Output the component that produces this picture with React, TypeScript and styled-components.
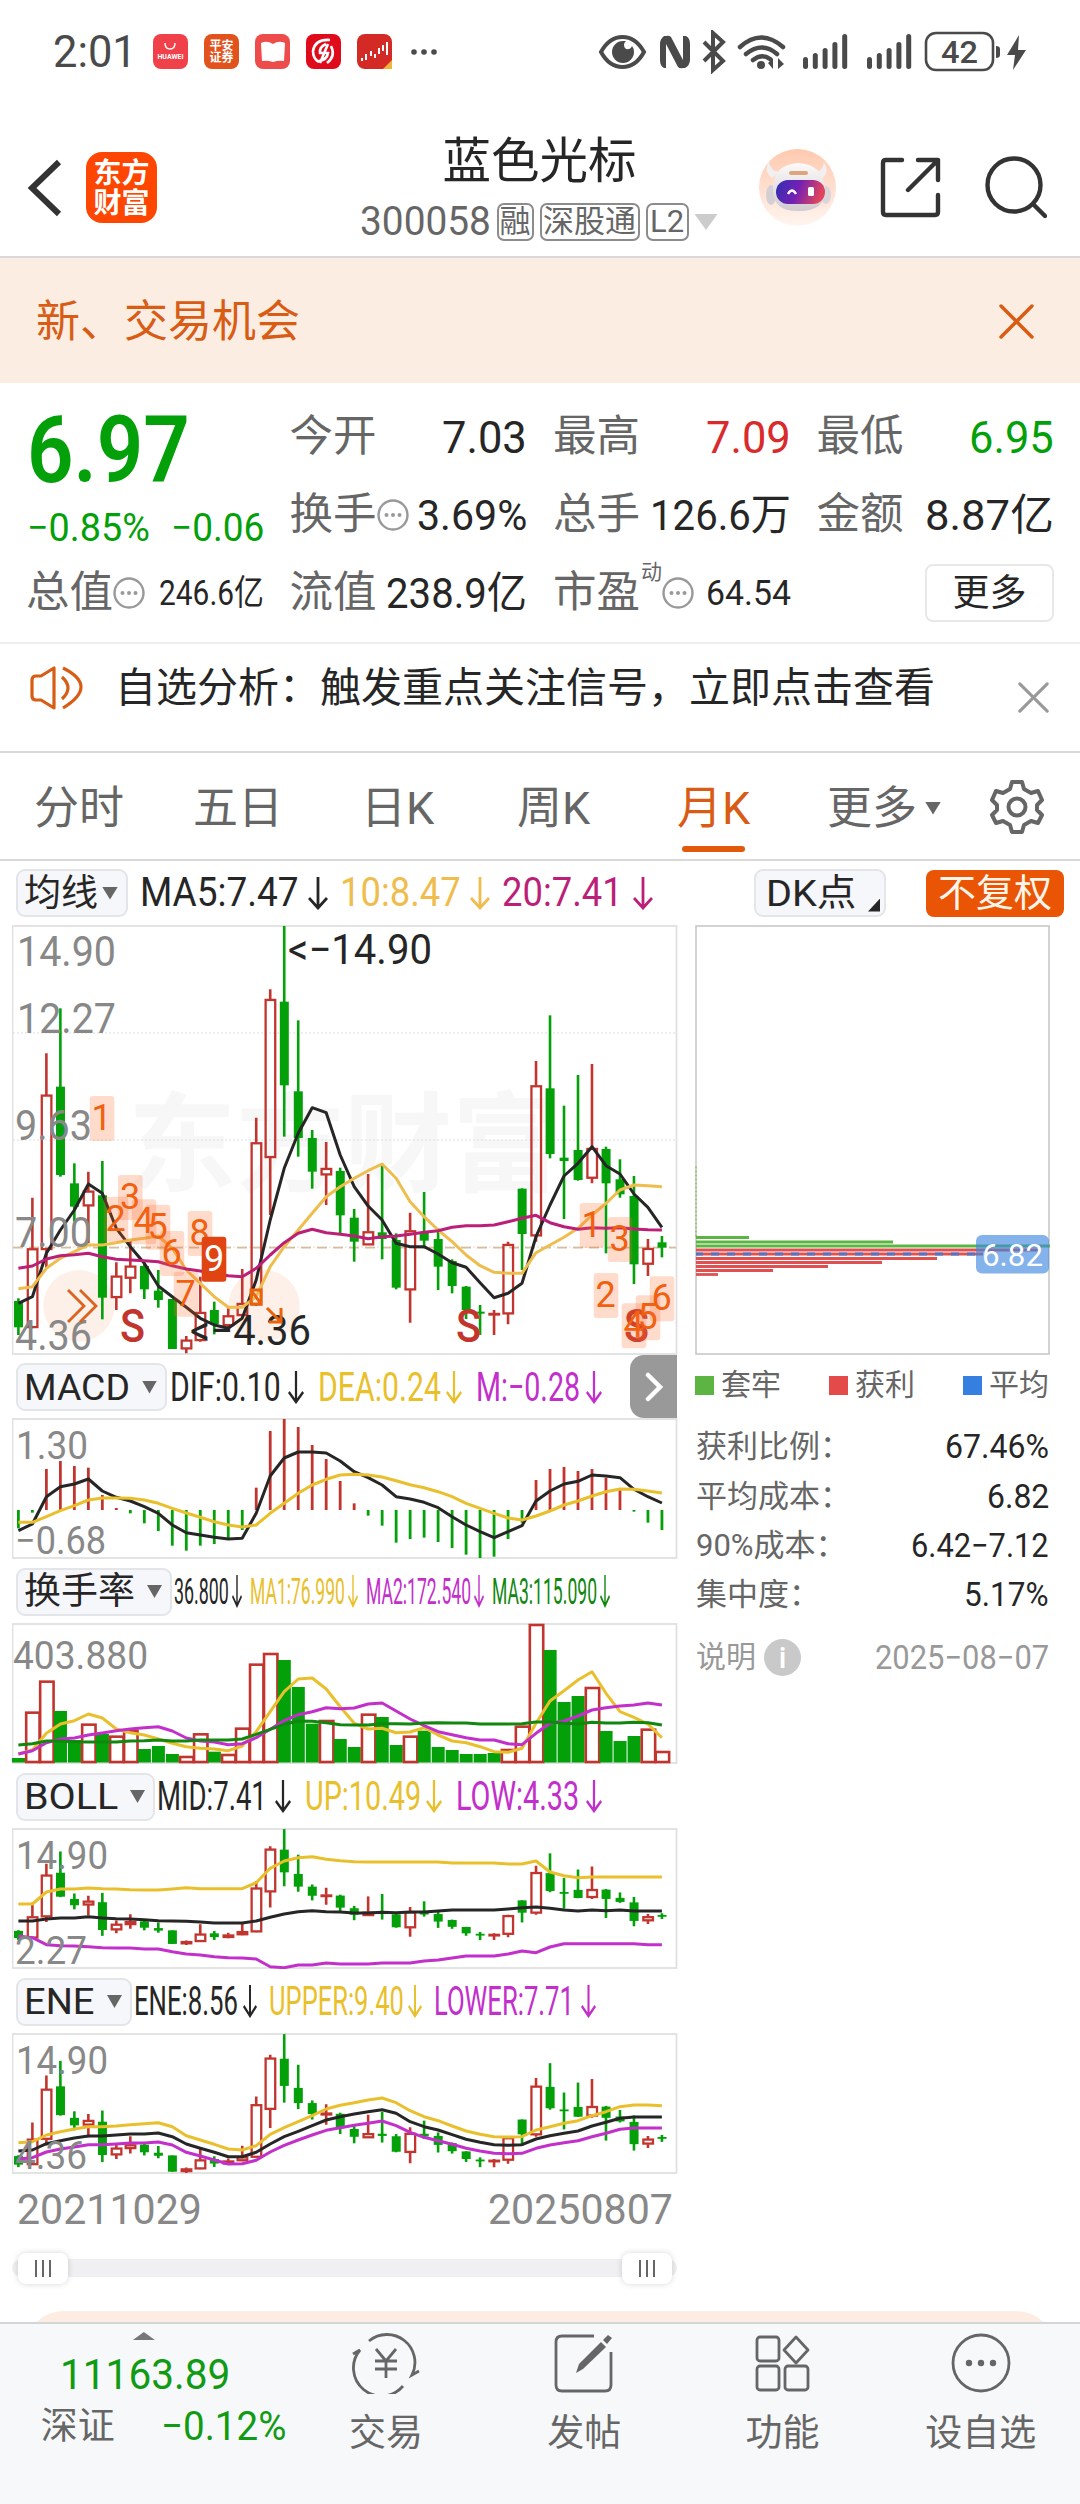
import React, { useLayoutEffect, useRef, useState } from 'react';
import styled, { createGlobalStyle } from 'styled-components';

const GREEN = '#04a00a';
const RED = '#c2352f';
const INK = '#262626';
const GREY = '#666';
const YELLOW = '#e9c02c';
const PURPLE = '#c22fcb';

const GlobalStyle = createGlobalStyle`
  * {
    box-sizing: border-box;
  }
  body {
    margin: 0;
    background: #fff;
    font-family: Roboto, 'Noto Sans CJK SC', sans-serif;
    color: ${INK};
  }
  svg {
    display: block;
    flex: none;
  }
`;

const Page = styled.div`
  width: 1080px;
  height: 2504px;
  overflow: hidden;
  display: flex;
  flex-direction: column;
  line-height: 1;
  white-space: nowrap;
`;

/* ---------- fitted text ---------- */

const FitBox = styled.span<{ $w: number }>`
  display: block;
  flex: none;
  width: ${({ $w }) => $w}px;
`;

const FitInner = styled.span`
  display: inline-block;
  vertical-align: top;
  transform-origin: left center;
`;

// Squeezes a label so that it takes exactly the width it was given
const FitText: React.FC<{ w: number; children: React.ReactNode }> = ({ w, children }) => {
  const ref = useRef<HTMLSpanElement>(null);
  const [scale, setScale] = useState(1);

  useLayoutEffect(() => {
    if (ref.current) setScale(w / ref.current.offsetWidth);
  }, [w, children]);

  return (
    <FitBox $w={w}>
      <FitInner ref={ref} style={{ transform: `scaleX(${scale})` }}>
        {children}
      </FitInner>
    </FitBox>
  );
};

/* ---------- status bar ---------- */

const StatusBar = styled.div`
  height: 103px;
  padding: 0 54px 0 53px;
  display: flex;
  align-items: center;
  justify-content: space-between;
  color: #4a4a4a;
`;

const StatusLeft = styled.div`
  display: flex;
  align-items: center;
  gap: 16px;
  font-size: 45px;
`;

const StatusRight = styled.div`
  display: flex;
  align-items: center;
`;

const AppBadge = styled.span<{ $bg: string }>`
  width: 35px;
  height: 35px;
  border-radius: 8px;
  background: ${({ $bg }) => $bg};
  color: #fff;
  display: flex;
  align-items: center;
  justify-content: center;
  text-align: center;
  white-space: pre;
  font-size: 12px;
  font-weight: 700;
`;

const BadgeStack = styled.span`
  display: flex;
  flex-direction: column;
  align-items: center;
  gap: 4px;
`;

const BadgeWord = styled.span`
  font-size: 7px;
`;

const StatusIcons = () => (
  <StatusRight>
    <svg width="428" height="44" viewBox="598 30 428 44" fill="#4a4a4a">
      <path d="M601 52c11-20 32-20 43 0-11 20-32 20-43 0z" fill="none" stroke="#4a4a4a" strokeWidth="4" />
      <path d="M623 41a11 11 0 1 0 11 11 9 9 0 0 0-2-6c-2 5-8 4-8-1 0-2 1-3 2-4z" />
      <path d="M664 36q-4 3-4 8v16q0 6 4 8h2V44l12 23q2 2 5 1h2q5-3 5-8V44q0-6-4-8h-3v24l-12-23q-2-2-5-1z" />
      <path d="M704 42l19 19-10 9V33l10 9-19 19" fill="none" stroke="#4a4a4a" strokeWidth="4" />
      <path d="M740 47q21-19 43 0M746 54q16-13 31 0M753 60q9-7 17-1" fill="none" stroke="#4a4a4a" strokeWidth="4.5" strokeLinecap="round" />
      <circle cx="761" cy="65" r="4" />
      <path d="M773 58v11l-5-6zM778 69V58l6 6z" />
      {[803, 867].map((x) =>
        [12, 16, 21, 27, 35].map((h, i) => (
          <rect key={`${x}-${i}`} x={x + i * 9.8} y={69 - h} width="5" height={h} rx="2.5" />
        ))
      )}
      <rect x="926" y="33" width="67" height="37" rx="10" fill="none" stroke="#4a4a4a" strokeWidth="2.6" />
      <path d="M996 46q4 0 4 3v6q0 3-4 3z" />
      <path d="M1019 35l-12 20h8l-2 15 13-20h-8z" />
      <text x="941" y="63" fontSize="32" fontWeight="500" textLength="37" lengthAdjust="spacingAndGlyphs">42</text>
    </svg>
  </StatusRight>
);

/* ---------- header ---------- */

const Header = styled.header`
  height: 155px;
  padding: 16px 31px 0 27px;
  display: flex;
  align-items: center;
  justify-content: space-between;
  border-bottom: 2px solid #d9d9d9;
`;

const HeaderSide = styled.div`
  width: 300px;
  display: flex;
  align-items: center;
`;

const HeaderRight = styled(HeaderSide)`
  width: 290px;
  gap: 44px;
`;

const BrandLogo = styled.span`
  width: 71px;
  height: 71px;
  margin-left: 23px;
  border-radius: 16px;
  background: #fe4600;
  color: #fff;
  font: 700 28px/30px 'Noto Sans CJK SC', sans-serif;
  text-align: center;
  white-space: pre;
  padding-top: 4px;
`;

const TitleBlock = styled.div`
  display: flex;
  flex-direction: column;
  align-items: center;
  margin: -5px 18px 0 0;
`;

const StockName = styled.h1`
  margin: 0 0 0 11px;
  font: 400 48.5px/58px 'Noto Sans CJK SC', sans-serif;
`;

const CodeLine = styled.div`
  display: flex;
  align-items: center;
  gap: 6px;
  height: 40px;
  margin: 16px 0 0 9px;
  font-size: 40px;
  color: ${GREY};
`;

const Tag = styled.span<{ $w: number }>`
  width: ${({ $w }) => $w}px;
  height: 38px;
  border: 2px solid #8c8c8c;
  border-radius: 7px;
  font-size: 31px;
  line-height: 34px;
  text-align: center;
`;

const Triangle = styled.span<{ $w: number; $h: number; $c?: string }>`
  flex: none;
  width: ${({ $w }) => $w}px;
  height: ${({ $h }) => $h}px;
  background: ${({ $c }) => $c || GREY};
  clip-path: polygon(0 0, 100% 0, 50% 100%);
`;

const RobotIcon = () => (
  <svg width="77" height="77" viewBox="0 0 77 77">
    <defs>
      <linearGradient id="halo" x1="0" y1="0" x2="0" y2="1">
        <stop offset="0" stopColor="#ffc9ae" />
        <stop offset="1" stopColor="#fff5f0" />
      </linearGradient>
      <linearGradient id="visor" x1="0" y1="0" x2="1" y2=".2">
        <stop offset="0" stopColor="#2f30b0" />
        <stop offset=".5" stopColor="#7420b4" />
        <stop offset="1" stopColor="#e0455c" />
      </linearGradient>
      <linearGradient id="shell" x1="0" y1="0" x2="0" y2="1">
        <stop offset="0" stopColor="#fdfafa" />
        <stop offset="1" stopColor="#cfcbd0" />
      </linearGradient>
    </defs>
    <circle cx="38.5" cy="38.5" r="38.5" fill="url(#halo)" />
    <path d="M10 13q-6 9 3 16l8-6q-9 0-11-10zM65 13q6 9-1 16l-9-6q9 0 10-10z" fill="#f1eff1" />
    <ellipse cx="12" cy="46" rx="5" ry="10" fill="#d3cfd5" />
    <ellipse cx="67" cy="46" rx="5" ry="9" fill="#d9d5da" />
    <path d="M14 40q0-24 25-26 25 1 27 26 2 22-27 22-26 0-25-22z" fill="url(#shell)" />
    <rect x="17" y="31" width="49" height="24" rx="12" fill="url(#visor)" />
    <rect x="30" y="22" width="19" height="4" rx="2" fill="#dda47e" />
    <path d="M29 45q4-7 8 0" fill="none" stroke="#fff" strokeWidth="2.4" />
    <rect x="49" y="38" width="6" height="9" rx="1.5" fill="#fff" />
  </svg>
);

/* ---------- banner ---------- */

const Banner = styled.div`
  height: 125px;
  padding: 2px 46px 0 36px;
  display: flex;
  align-items: center;
  justify-content: space-between;
  background: #fcede3;
  color: #d85c14;
  font-size: 44px;
`;

const Cross: React.FC<{ size: number; color: string }> = ({ size, color }) => (
  <svg width={size} height={size} viewBox="0 0 34 34" fill="none" stroke={color} strokeWidth="3.4">
    <path d="M2 2l30 30M32 2L2 32" strokeLinecap="round" />
  </svg>
);

/* ---------- quote ---------- */

const Quote = styled.section`
  height: 261px;
  padding: 15px 26px 0 28px;
  display: grid;
  grid-template-columns: repeat(4, 235.5px);
  grid-template-rows: repeat(3, 78px);
  column-gap: 28px;
  border-bottom: 2px solid #ededed;
`;

const PriceBlock = styled.div`
  grid-row: span 2;
  margin-left: -1px;
  padding-top: 7px;
  color: ${GREEN};
`;

const Price = styled.div`
  font-size: 92px;
  font-weight: 600;
`;

const Change = styled.div`
  display: flex;
  justify-content: space-between;
  margin-top: 12px;
  font-size: 39px;
`;

const Cell = styled.div<{ $color?: string; $size?: number }>`
  display: flex;
  align-items: center;
  justify-content: space-between;
  color: ${({ $color }) => $color || INK};
  font-size: ${({ $size }) => $size || 43}px;
`;

const CellLabel = styled.span`
  display: flex;
  align-items: center;
  margin-left: -2px;
  font-size: 43.5px;
  color: ${GREY};
`;

const Sup = styled.sup`
  font-size: 21px;
  align-self: flex-start;
  margin: -9px 0 0 1px;
`;

const MoreButton = styled.button`
  width: 129px;
  height: 58px;
  margin-left: auto;
  border: 2px solid #e8e8e8;
  border-radius: 8px;
  background: #fff;
  color: ${INK};
  font: 400 37px/48px 'Noto Sans CJK SC', sans-serif;
  padding: 0 0 6px;
`;

const DotsCircle = () => (
  <svg width="32" height="32" viewBox="0 0 32 32" fill="#999">
    <circle cx="16" cy="16" r="14.5" fill="none" stroke="#999" strokeWidth="2.4" />
    {[9.5, 16, 22.5].map((x) => (
      <circle key={x} cx={x} cy="16" r="2" />
    ))}
  </svg>
);

interface QuoteItem {
  label: string;
  value: string;
  w: number;
  color?: string;
  size?: number;
  info?: boolean;
  sup?: string;
}

const quoteRows: QuoteItem[] = [
  { label: '今开', value: '7.03', w: 85, size: 45 },
  { label: '最高', value: '7.09', w: 85, size: 45, color: '#d92b2b' },
  { label: '最低', value: '6.95', w: 85, size: 45, color: GREEN },
  { label: '换手', value: '3.69%', w: 110, info: true },
  { label: '总手', value: '126.6万', w: 141 },
  { label: '金额', value: '8.87亿', w: 129 },
  { label: '总值', value: '246.6亿', w: 105, size: 35, info: true },
  { label: '流值', value: '238.9亿', w: 141 },
  { label: '市盈', value: '64.54', w: 85, size: 35, info: true, sup: '动' },
];

/* ---------- notice ---------- */

const Notice = styled.div`
  height: 109px;
  padding: 0 31px 0 30px;
  display: flex;
  align-items: center;
  border-bottom: 2px solid #d9d9d9;
  font-size: 41px;
`;

const NoticeText = styled.span`
  flex: 1;
  margin: -18px 0 0 31px;
`;

const NoticeIcon = styled.span`
  margin-top: -20px;
`;

/* ---------- tabs ---------- */

const Tabs = styled.nav`
  height: 108px;
  padding: 1px 36px 0 34px;
  display: flex;
  align-items: center;
  border-bottom: 2px solid #d9d9d9;
  font-size: 45px;
  color: ${GREY};
`;

const Tab = styled.span<{ $w: number; $active?: boolean }>`
  position: relative;
  width: ${({ $w }) => $w}px;
  padding-top: 3px;
  display: flex;
  align-items: center;
  gap: 8px;
  color: ${({ $active }) => ($active ? '#d85c14' : GREY)};
  &::after {
    content: '';
    display: ${({ $active }) => ($active ? 'block' : 'none')};
    position: absolute;
    left: 5px;
    top: 63px;
    width: 63px;
    height: 6px;
    border-radius: 3px;
    background: #e15a0c;
  }
`;

/* ---------- indicator rows ---------- */

const Toolbar = styled.div`
  height: 64px;
  padding: 0 16px;
  display: flex;
  align-items: center;
`;

const Picker = styled.span<{ $w: number }>`
  flex: none;
  width: ${({ $w }) => $w}px;
  height: 48px;
  padding: 0 8px 0 6px;
  display: flex;
  align-items: center;
  justify-content: space-between;
  border: 2px solid #e3e5e9;
  border-radius: 9px;
  background: #f6f7fa;
  font-size: 37px;
`;

const DkPicker = styled(Picker)`
  margin-left: auto;
  padding: 0 4px 0 10px;
`;

const Corner = styled.span`
  width: 12px;
  height: 13px;
  margin-top: 24px;
  background: ${INK};
  clip-path: polygon(100% 0, 100% 100%, 0 100%);
`;

const Adjust = styled.span`
  width: 138px;
  height: 47px;
  margin-left: 40px;
  border-radius: 8px;
  background: #e95504;
  color: #fff5ea;
  font-size: 38px;
  line-height: 46px;
  text-align: center;
`;

const IndicatorRow = styled.div<{ $h: number }>`
  height: ${({ $h }) => $h}px;
  padding: 1px 0 0 4px;
  display: flex;
  align-items: center;
`;

const LegendItem = styled.span<{ $color: string; $ml: number; $gap: number; $size: number }>`
  display: flex;
  align-items: center;
  margin-left: ${({ $ml }) => $ml}px;
  gap: ${({ $gap }) => $gap}px;
  color: ${({ $color }) => $color};
  font-size: ${({ $size }) => $size}px;
`;

const NextButton = styled.span`
  width: 47px;
  height: 63px;
  margin: -1px 0 0 auto;
  border-radius: 14px 0 0 14px;
  background: #999;
  display: flex;
  align-items: center;
  justify-content: center;
`;

const Arrow: React.FC<{ w: number }> = ({ w }) => (
  <svg width={w} height="33" viewBox="0 0 20 33" preserveAspectRatio="none" fill="none" stroke="currentColor" strokeWidth="2.8">
    <path d="M10 0v31M1 21l9 10 9-10" />
  </svg>
);

// text, colour, left margin, text width, gap, arrow width
type LegendEntry = [string, string, number, number, number, number];

const Legend: React.FC<{ items: LegendEntry[]; size?: number }> = ({ items, size = 41 }) => (
  <>
    {items.map(([text, color, ml, w, gap, arrow]) => (
      <LegendItem key={text} $color={color} $ml={ml} $gap={gap} $size={size}>
        <FitText w={w}>{text}</FitText>
        <Arrow w={arrow} />
      </LegendItem>
    ))}
  </>
);

/* ---------- chart data ---------- */

// wick top, wick bottom, body top, body bottom (in thirds of a pixel), 1 = rising
const candles = [
  [1195, 1305, 1203, 1282, 0], [893, 1285, 1046, 1283, 1], [460, 1105, 585, 1049, 1], [325, 830, 560, 825, 0],
  [790, 965, 850, 920, 0], [815, 1030, 873, 918, 1], [783, 1258, 886, 1193, 0], [1087, 1230, 1128, 1193, 1],
  [1020, 1180, 1098, 1135, 1], [1090, 1197, 1098, 1168, 0], [1110, 1223, 1172, 1200, 0], [1197, 1347, 1197, 1347, 0],
  [1308, 1360, 1320, 1347, 1], [1130, 1325, 1237, 1322, 1], [1205, 1303, 1230, 1272, 0], [1225, 1285, 1247, 1277, 1],
  [1107, 1250, 1210, 1247, 1], [653, 1217, 728, 1215, 1], [268, 945, 298, 773, 1], [78, 710, 305, 556, 0],
  [361, 770, 574, 714, 0], [690, 866, 714, 815, 0], [726, 915, 805, 825, 1], [803, 1000, 813, 946, 0],
  [927, 1085, 953, 1025, 0], [822, 1035, 995, 1035, 1], [795, 1078, 997, 1017, 0], [1000, 1168, 1020, 1163, 0],
  [938, 1268, 992, 1170, 1], [876, 1045, 997, 1022, 0], [985, 1170, 1017, 1100, 0], [1078, 1180, 1083, 1158, 0],
  [1158, 1257, 1160, 1230, 0], [1215, 1305, 1235, 1241, 0], [1230, 1305, 1240, 1243, 1], [1025, 1273, 1033, 1242, 1],
  [865, 1110, 866, 1002, 0], [483, 1025, 557, 1008, 1], [346, 775, 565, 762, 0], [617, 957, 773, 783, 0],
  [525, 842, 750, 840, 0], [492, 850, 745, 835, 1], [740, 1060, 747, 850, 0], [778, 893, 838, 883, 0],
  [828, 1152, 888, 1093, 0], [1017, 1128, 1045, 1093, 1], [1008, 1072, 1027, 1043, 0],
];

const ma5 = [1210, 1190, 1060, 990, 930, 852, 880, 985, 1040, 1090, 1158, 1190, 1222, 1255, 1275, 1285, 1255, 1140, 960, 805, 700, 623, 638, 765, 860, 918, 960, 1030, 1040, 1040, 1062, 1088, 1102, 1148, 1193, 1180, 1150, 1010, 915, 828, 790, 740, 797, 822, 882, 922, 982];
const ma10 = [1166, 1160, 1105, 1075, 1055, 1035, 1035, 1028, 1020, 1015, 1008, 1045, 1110, 1150, 1190, 1222, 1222, 1190, 1100, 1040, 990, 940, 890, 860, 835, 812, 792, 835, 905, 950, 990, 1025, 1065, 1097, 1117, 1120, 1120, 1058, 1035, 1012, 985, 945, 910, 870, 855, 857, 860];
const ma20 = [1105, 1098, 1077, 1067, 1064, 1060, 1070, 1078, 1080, 1082, 1085, 1097, 1107, 1113, 1120, 1127, 1130, 1105, 1065, 1028, 1000, 988, 998, 1003, 1008, 1016, 1010, 1008, 1003, 997, 992, 982, 977, 977, 975, 965, 955, 946, 968, 980, 988, 983, 985, 983, 987, 989, 990];

const macdBars = [535, 488, 357, 333, 348, 353, 435, 474, 490, 520, 543, 587, 602, 587, 582, 565, 540, 413, 243, 207, 231, 285, 327, 393, 460, 497, 527, 578, 567, 563, 576, 594, 614, 624, 620, 567, 518, 390, 357, 351, 363, 357, 383, 415, 485, 518, 540];
const dif = [542, 522, 440, 410, 402, 387, 423, 442, 453, 470, 490, 525, 548, 555, 562, 567, 565, 490, 378, 324, 306, 306, 309, 333, 365, 383, 405, 440, 447, 457, 473, 500, 525, 545, 563, 545, 527, 453, 423, 402, 394, 375, 378, 383, 418, 440, 459];
const dea = [517, 517, 500, 482, 467, 450, 444, 444, 445, 450, 460, 475, 489, 502, 515, 525, 531, 525, 490, 460, 430, 405, 388, 375, 373, 375, 381, 392, 404, 413, 425, 440, 460, 475, 490, 504, 510, 498, 483, 465, 453, 438, 425, 417, 418, 423, 429];

const turnover = [594, 455, 362, 453, 540, 491, 522, 527, 510, 567, 558, 582, 588, 520, 575, 582, 503, 311, 279, 300, 381, 491, 480, 537, 561, 461, 471, 555, 527, 512, 561, 570, 582, 582, 579, 567, 497, 192, 270, 426, 408, 381, 513, 543, 528, 506, 573];
const turnoverUp = [1, 2, 5, 7, 8, 12, 13, 15, 16, 17, 18, 22, 25, 28, 35, 36, 37, 41, 45, 46];
const tMa1 = [582, 570, 520, 492, 482, 462, 474, 507, 518, 525, 537, 550, 560, 565, 567, 572, 558, 515, 455, 395, 357, 354, 387, 440, 490, 507, 505, 518, 516, 503, 525, 543, 548, 560, 575, 577, 565, 490, 423, 392, 360, 335, 400, 455, 472, 492, 533];
const tMa2 = [582, 572, 548, 537, 534, 525, 519, 512, 507, 503, 500, 513, 534, 543, 546, 554, 551, 533, 508, 482, 464, 455, 443, 446, 444, 432, 429, 453, 477, 497, 515, 524, 533, 540, 540, 551, 554, 520, 490, 483, 468, 450, 443, 438, 435, 429, 435];
const tMa3 = [555, 551, 543, 543, 545, 546, 546, 546, 543, 542, 540, 543, 543, 540, 540, 540, 537, 523, 508, 493, 483, 484, 488, 494, 495, 495, 491, 491, 492, 489, 488, 489, 489, 492, 492, 492, 491, 486, 486, 490, 492, 487, 489, 489, 487, 488, 495];

const bollUp = [402, 402, 366, 357, 357, 354, 356, 357, 359, 360, 360, 357, 353, 356, 356, 356, 356, 338, 295, 273, 263, 260, 268, 272, 275, 276, 276, 276, 276, 276, 276, 279, 279, 279, 279, 282, 282, 273, 306, 317, 323, 321, 321, 321, 321, 321, 321];
const bollMid = [453, 453, 447, 444, 444, 440, 444, 446, 447, 449, 452, 453, 454, 456, 459, 459, 459, 453, 442, 432, 425, 422, 425, 426, 429, 429, 427, 428, 426, 426, 423, 420, 420, 420, 420, 417, 413, 411, 415, 420, 423, 420, 422, 420, 423, 423, 423];
const bollLow = [498, 503, 524, 527, 528, 530, 533, 534, 534, 537, 537, 545, 552, 555, 560, 563, 564, 567, 590, 593, 585, 585, 579, 582, 582, 582, 579, 579, 579, 573, 570, 564, 558, 558, 558, 552, 543, 548, 531, 521, 521, 521, 521, 521, 521, 524, 524];

const eneUp = [518, 515, 495, 485, 477, 470, 470, 468, 464, 461, 458, 470, 497, 510, 523, 537, 540, 527, 493, 473, 455, 437, 417, 406, 398, 390, 384, 398, 422, 440, 452, 468, 483, 493, 500, 501, 500, 480, 470, 460, 452, 437, 425, 410, 405, 405, 407];
const eneMid = [543, 540, 521, 512, 504, 498, 498, 495, 492, 492, 489, 500, 522, 535, 547, 560, 560, 547, 522, 500, 484, 467, 450, 440, 432, 425, 419, 430, 455, 470, 480, 494, 508, 517, 524, 526, 524, 507, 497, 490, 483, 468, 457, 445, 441, 441, 441];
const eneLow = [567, 563, 546, 537, 531, 524, 524, 522, 519, 519, 516, 525, 547, 558, 570, 582, 581, 571, 546, 526, 510, 495, 481, 473, 466, 460, 453, 467, 487, 502, 512, 523, 535, 543, 550, 551, 550, 535, 525, 518, 512, 500, 490, 478, 474, 474, 474];

// nine-turn counters: digit, x, y
const counters: [number, number, number][] = [
  [1, 77.7, 171], [2, 91.7, 271.7], [3, 106, 250], [4, 119.7, 274.3], [5, 133.7, 279.7], [6, 147.7, 306],
  [7, 161.7, 346.7], [8, 175.7, 286], [1, 567.7, 278], [2, 581.7, 348], [3, 595.7, 292], [4, 609.7, 378.3],
  [5, 623.7, 370.3], [6, 637.7, 351.3],
];

const px = (i: number) => 6.4 + i * 13.99;

/* ---------- chart parts ---------- */

const Line: React.FC<{ data: number[]; off: number; color: string }> = ({ data, off, color }) => (
  <polyline
    points={data.map((v, i) => `${px(i).toFixed(1)},${(v / 3 - off).toFixed(1)}`).join(' ')}
    fill="none"
    stroke={color}
    strokeWidth="3"
    strokeLinejoin="round"
  />
);

const Candles: React.FC<{ scale: (v: number) => number }> = ({ scale }) => (
  <>
    {candles.map(([hi, lo, top, bottom, up], i) => {
      const [h, l, t, b] = [hi, lo, top, bottom].map(scale);
      const x = px(i);
      return up ? (
        <g key={i} stroke={RED} fill="none">
          <path d={`M${x} ${h}V${t}M${x} ${b}V${l}`} strokeWidth="2.6" />
          <rect x={x - 4.6} y={t + 0.6} width="9.6" height={Math.max(b - t - 1.2, 0.6)} strokeWidth="2.3" />
        </g>
      ) : (
        <g key={i} fill={GREEN}>
          <rect x={x - 1.3} y={h} width="2.6" height={l - h} />
          <rect x={x - 4.4} y={t} width="9" height={Math.max(b - t, 1.8)} />
        </g>
      );
    })}
  </>
);

const AxisLabel: React.FC<{ x: number; y: number; w: number; size?: number; color?: string; children: string }> = ({
  x, y, w, size = 42, color = '#888', children,
}) => (
  <text x={x} y={y} fontSize={size} fill={color} textLength={w} lengthAdjust="spacingAndGlyphs">
    {children}
  </text>
);

const Frame: React.FC<{ h: number }> = ({ h }) => (
  <rect x="0.5" y="1" width="664" height={h - 2} fill="none" stroke="#e0e0e0" strokeWidth="1.8" />
);

const MainChart = () => (
  <svg width="666" height="430">
    <text x="116" y="258" fontSize="108" fontWeight="700" fill="#f7f7f7">东方财富</text>
    {[108, 215, 322].map((y) => (
      <path key={y} d={`M1 ${y}H664`} stroke="#dcdcdc" strokeDasharray="2 2" />
    ))}
    <Frame h={430} />
    <path d="M1 322.6H664" stroke="#d6bd9c" strokeWidth="1.6" strokeDasharray="10 6" />
    <circle cx="67" cy="380.7" r="35.7" fill="#fdf0e9" />
    <circle cx="252" cy="380.7" r="35.7" fill="#fdf0e9" />
    <Candles scale={(v) => v / 3 - 25} />
    <Line data={ma5} off={25} color={INK} />
    <Line data={ma10} off={25} color="#efbd4e" />
    <Line data={ma20} off={25} color="#bb1f77" />
    <AxisLabel x={5} y={41} w={99}>14.90</AxisLabel>
    <AxisLabel x={5} y={108} w={99}>12.27</AxisLabel>
    <AxisLabel x={3} y={215} w={77}>9.63</AxisLabel>
    <AxisLabel x={3} y={322} w={77}>7.00</AxisLabel>
    <AxisLabel x={3} y={425} w={77}>4.36</AxisLabel>
    <AxisLabel x={276} y={39} w={144} color={INK}>{'<−14.90'}</AxisLabel>
    <AxisLabel x={178} y={420} w={121} color={INK}>{'<−4.36'}</AxisLabel>
    {[108, 444, 612].map((x) => (
      <text key={x} x={x} y="417" fontSize="46" fontWeight="500" fill={RED} textLength="25" lengthAdjust="spacingAndGlyphs">S</text>
    ))}
    {counters.map(([n, x, y]) => (
      <g key={`${n}-${x}`}>
        <rect x={x} y={y} width="24.6" height="45" rx="3" fill="#ff6a2b" fillOpacity=".24" />
        <text x={x + 12} y={y + 34} fontSize="36" fill="#f0600f" textAnchor="middle">{n}</text>
      </g>
    ))}
    <rect x="189.7" y="311.7" width="24.6" height="45" rx="3" fill="#e04413" />
    <text x="202" y="346" fontSize="36" fill="#fff" textAnchor="middle">9</text>
    <path d="M56 365l16 16-16 16M68 365l16 16-16 16" fill="none" stroke="#db6320" strokeWidth="2.8" />
    <path d="M239 365h10v14h-10zM239 365l10 14M255 383l14 14M257 397h12v-14" fill="none" stroke="#e8630c" strokeWidth="3" />
  </svg>
);

const MacdChart = () => (
  <svg width="666" height="141">
    <Frame h={141} />
    {macdBars.map((v, i) => (
      <path key={i} d={`M${px(i)} 92V${v / 3 - 68}`} stroke={v < 480 ? RED : GREEN} strokeWidth="2.8" />
    ))}
    <Line data={dif} off={68} color={INK} />
    <Line data={dea} off={68} color={YELLOW} />
    <AxisLabel x={4} y={41} w={72} size={39}>1.30</AxisLabel>
    <AxisLabel x={3} y={136} w={91} size={39}>−0.68</AxisLabel>
  </svg>
);

const TurnoverChart = () => (
  <svg width="666" height="141">
    <Frame h={141} />
    {turnover.map((v, i) => {
      const y = v / 3 - 63;
      return turnoverUp.includes(i) ? (
        <rect key={i} x={px(i) - 6.2} y={y + 1} width="13.4" height={138 - y} fill="#fff" stroke={RED} strokeWidth="2.6" />
      ) : (
        <rect key={i} x={px(i) - 6.4} y={y} width="13" height={139.5 - y} fill={GREEN} />
      );
    })}
    <Line data={tMa1} off={63} color={YELLOW} />
    <Line data={tMa2} off={63} color={PURPLE} />
    <Line data={tMa3} off={63} color="#11870f" />
    <AxisLabel x={1} y={46} w={135} size={39}>403.880</AxisLabel>
  </svg>
);

const BollChart = () => (
  <svg width="666" height="141">
    <Frame h={141} />
    <Candles scale={(v) => 1 + ((v - 77) / 1282) * 139 * (10.54 / 12.63)} />
    <Line data={bollMid} off={58} color={INK} />
    <Line data={bollUp} off={58} color={YELLOW} />
    <Line data={bollLow} off={58} color={PURPLE} />
    <AxisLabel x={4} y={41} w={92} size={39}>14.90</AxisLabel>
    <AxisLabel x={3} y={136} w={72} size={39}>2.27</AxisLabel>
  </svg>
);

const EneChart = () => (
  <svg width="666" height="141">
    <Frame h={141} />
    <Candles scale={(v) => 1 + ((v - 77) / 1282) * 139} />
    <Line data={eneMid} off={63} color={INK} />
    <Line data={eneUp} off={63} color={YELLOW} />
    <Line data={eneLow} off={63} color={PURPLE} />
    <AxisLabel x={4} y={41} w={92} size={39}>14.90</AxisLabel>
    <AxisLabel x={3} y={136} w={72} size={39}>4.36</AxisLabel>
  </svg>
);

/* ---------- cost distribution ---------- */

const costBars: [number, number, string][] = [
  [313, 53, '#5cb543'], [317.5, 197, '#5cb543'], [321.5, 354, '#5cb543'], [325.5, 345, '#e05050'],
  [329.5, 287, '#e05050'], [334, 241, '#e05050'], [338, 186, '#e05050'], [342, 132, '#e05050'],
  [346, 77, '#e05050'], [350, 22, '#e05050'],
];

const CostChart = () => (
  <svg width="355" height="430">
    <g transform="translate(0 -0.5)">
      <rect x="1" y="1.5" width="353" height="428" fill="none" stroke="#c9c9c9" strokeWidth="1.6" />
      <path d="M1 242v70" stroke="#5cb543" strokeDasharray="2 2" />
      {costBars.map(([y, w, c]) => (
        <path key={y} d={`M1 ${y}h${w}`} stroke={c} strokeWidth="2.8" />
      ))}
      <path d="M1 329.5H281" stroke="#4a78c8" strokeWidth="3.2" strokeDasharray="8 8" strokeDashoffset="1" />
      <rect x="281" y="310.5" width="73" height="38.5" rx="6" fill="#3f86df" fillOpacity=".64" />
      <text x="287" y="341" fontSize="32" fill="#fff" textLength="61" lengthAdjust="spacingAndGlyphs">6.82</text>
    </g>
  </svg>
);

const ChartArea = styled.div`
  display: flex;
  height: 1397px;
  padding-left: 12px;
`;

const LeftColumn = styled.div`
  width: 665px;
  margin-right: 18px;
`;

const RightColumn = styled.aside`
  width: 354px;
  font-size: 31px;
  color: ${GREY};
`;

const CostLegend = styled.div`
  display: flex;
  justify-content: space-between;
  margin-top: 15px;
  font-size: 30px;
`;

const LegendKey = styled.span<{ $color: string }>`
  display: flex;
  align-items: center;
  gap: 7px;
  &::before {
    content: '';
    width: 19px;
    height: 19px;
    background: ${({ $color }) => $color};
  }
`;

const Stats = styled.div`
  margin-top: 22px;
`;

const StatRow = styled.div`
  height: 49.4px;
  padding-left: 1px;
  display: flex;
  align-items: center;
  justify-content: space-between;
`;

const StatValue = styled.span`
  color: ${INK};
  font-size: 33px;
`;

const NoteRow = styled(StatRow)`
  margin-top: 13px;
  font-size: 30px;
  color: #999;
`;

const NoteLabel = styled.span`
  display: flex;
  align-items: center;
  gap: 8px;
`;

const NoteDate = styled(StatValue)`
  color: #999;
`;

const InfoDot = styled.span`
  width: 37px;
  height: 37px;
  border-radius: 50%;
  background: #c9c9c9;
  color: #fff;
  font-size: 30px;
  font-weight: 500;
  line-height: 37px;
  text-align: center;
`;

const Dates = styled.div`
  height: 71px;
  padding: 0 4px 0 5px;
  display: flex;
  align-items: center;
  justify-content: space-between;
  font-size: 42px;
  color: #888;
`;

const Slider = styled.div`
  height: 18px;
  margin-top: 14px;
  padding: 0 5px 0 6px;
  border-radius: 9px;
  background: #f0f0f3;
  display: flex;
  align-items: center;
  justify-content: space-between;
`;

const Thumb = styled.span`
  width: 50px;
  height: 31px;
  border-radius: 8px;
  background: #fff;
  box-shadow: 0 0 6px rgba(0, 0, 0, 0.16);
  display: flex;
  align-items: center;
  justify-content: center;
  gap: 5px;
`;

const Grip = styled.i`
  width: 2px;
  height: 17px;
  background: #666;
`;

const PeachCard = styled.div`
  height: 11px;
  margin: -11px 24px 0;
  overflow: hidden;
  &::before {
    content: '';
    display: block;
    height: 90px;
    border-radius: 40px;
    background: #fcece2;
  }
`;

/* ---------- bottom bar ---------- */

const BottomBar = styled.footer`
  flex: 1;
  display: flex;
  border-top: 2px solid #d3d6d9;
  background: #f6f8fa;
  color: ${GREY};
`;

const IndexBox = styled.div`
  width: 287px;
  padding-left: 3px;
  display: flex;
  flex-direction: column;
  align-items: center;
  color: #119a14;
  font-size: 42px;
`;

const Caret = styled.span`
  width: 22px;
  height: 8px;
  margin: 8px 2px 14px 0;
  background: #777;
  clip-path: polygon(50% 0, 100% 100%, 0 100%);
`;

const IndexLine = styled.div`
  width: 245px;
  display: flex;
  justify-content: space-between;
  align-items: center;
  margin: 10px 0 0 37px;
  font-size: 41px;
`;

const IndexName = styled.span`
  font-size: 37px;
  color: ${GREY};
`;

const NavItem = styled.div`
  width: 198.5px;
  display: flex;
  flex-direction: column;
  align-items: center;
  gap: 21px;
  padding-top: 8px;
  font-size: 37px;
`;

const navIcons: [string, React.ReactNode][] = [
  ['交易', (
    <>
      <path d="M18 9A28 28 0 0 1 61 43l7-4M52 54A28 28 0 0 1 9 18l-7 4" />
      <path d="M25 17l10 12 10-12M35 29v17M24 29h22M24 37h22" />
    </>
  )],
  ['发帖', (
    <>
      <path d="M45 4H13q-6 0-6 6v43q0 6 6 6h43q6 0 6-6V20" />
      <path d="M27 41l3-9 22-22 5 5-23 22z" fill="#666" stroke="none" />
      <path d="M54 8l5-5 4 3-5 6z" fill="#666" stroke="none" />
    </>
  )],
  ['功能', (
    <>
      <rect x="9" y="5" width="22" height="24" rx="3" />
      <rect x="9" y="34" width="22" height="24" rx="3" />
      <rect x="37" y="34" width="23" height="24" rx="3" />
      <path d="M48 5l12 13-12 13-12-13z" strokeLinejoin="round" />
    </>
  )],
  ['设自选', (
    <>
      <circle cx="35" cy="31" r="28" />
      {[23, 35, 47].map((x) => (
        <circle key={x} cx={x} cy="31" r="3.2" fill="#666" stroke="none" />
      ))}
    </>
  )],
];

const App: React.FC = () => (
  <Page>
    <GlobalStyle />
    <StatusBar>
      <StatusLeft>
        <FitText w={84}>2:01</FitText>
        <AppBadge $bg="#f0414b">
          <BadgeStack>
            <svg width="12" height="7" viewBox="0 0 12 7" fill="none" stroke="#fff" strokeWidth="1.4">
              <path d="M1 0q0 6 5 6t5-6" />
            </svg>
            <BadgeWord>HUAWEI</BadgeWord>
          </BadgeStack>
        </AppBadge>
        <AppBadge $bg="#e2521d">{'平安\n证券'}</AppBadge>
        <AppBadge $bg="#ee4b4b">
          <svg width="26" height="22" viewBox="0 0 26 22" fill="#fff">
            <path d="M1 2q6-3 12 1 6-4 12-1l-1 18q-5-1-11 1-6-2-11-1z" />
          </svg>
        </AppBadge>
        <AppBadge $bg="#df0a1a">
          <svg width="28" height="30" viewBox="0 0 28 30" fill="none" stroke="#fff" strokeWidth="2.6">
            <path d="M20 3Q5 2 3 14q0 8 6 11M16 7q-7 3-6 9h8q-1 7-9 8M21 9q5 10-4 17M18 7l-8 19" />
          </svg>
        </AppBadge>
        <AppBadge $bg="#d42a26">
          <svg width="35" height="35" viewBox="0 0 35 35" fill="none" stroke="#fff" strokeWidth="2">
            <path d="M5 24v3M9 20v6M14 17v5M18 20v4M22 14v6M26 11v6M30 8v13" />
            <path d="M35 26v9h-9z" fill="#f0b43a" stroke="none" />
          </svg>
        </AppBadge>
        <svg width="30" height="8" viewBox="0 0 30 8" fill="#4a4a4a">
          {[6, 16, 26].map((x) => (
            <circle key={x} cx={x} cy="4" r="2.8" />
          ))}
        </svg>
      </StatusLeft>
      <StatusIcons />
    </StatusBar>

    <Header>
      <HeaderSide>
        <svg width="36" height="58" viewBox="0 0 36 58" fill="none" stroke="#333" strokeWidth="6">
          <path d="M32 3L5 29l27 26" />
        </svg>
        <BrandLogo>{'东方\n财富'}</BrandLogo>
      </HeaderSide>
      <TitleBlock>
        <StockName>蓝色光标</StockName>
        <CodeLine>
          <FitText w={131}>300058</FitText>
          <Tag $w={37}>融</Tag>
          <Tag $w={100}>深股通</Tag>
          <Tag $w={43}>L2</Tag>
          <Triangle $w={23} $h={16} $c="#ccc" />
        </CodeLine>
      </TitleBlock>
      <HeaderRight>
        <RobotIcon />
        <svg width="61" height="61" viewBox="0 0 61 61" fill="none" stroke="#333" strokeWidth="4.4" strokeLinecap="round" strokeLinejoin="round">
          <path d="M22 3H6q-3 0-3 3v49q0 3 3 3h49q3 0 3-3V38M38 3h20v20M58 3L28 33" />
        </svg>
        <svg width="62" height="64" viewBox="0 0 62 64" fill="none" stroke="#333" strokeWidth="4.4" strokeLinecap="round">
          <circle cx="29" cy="29" r="26.5" />
          <path d="M48 48l12 12" />
        </svg>
      </HeaderRight>
    </Header>

    <Banner>
      新、交易机会
      <Cross size={35} color="#d85c14" />
    </Banner>

    <Quote>
      <PriceBlock>
        <Price><FitText w={163}>6.97</FitText></Price>
        <Change>
          <FitText w={123}>−0.85%</FitText>
          <FitText w={93}>−0.06</FitText>
        </Change>
      </PriceBlock>
      {quoteRows.map((q) => (
        <Cell key={q.label} $color={q.color} $size={q.size}>
          <CellLabel>
            {q.label}
            {q.sup && <Sup>{q.sup}</Sup>}
            {q.info && <DotsCircle />}
          </CellLabel>
          <FitText w={q.w}>{q.value}</FitText>
        </Cell>
      ))}
      <Cell><MoreButton>更多</MoreButton></Cell>
    </Quote>

    <Notice>
      <NoticeIcon>
        <svg width="54" height="44" viewBox="0 0 54 44" fill="none" stroke="#d85c14" strokeWidth="3.2" strokeLinejoin="round">
          <path d="M2 14q0-4 4-4h5L24 2v40L11 34H6q-4 0-4-4z" />
          <path d="M32 11q12 11 0 22M33 2q36 18 0 40" />
        </svg>
      </NoticeIcon>
      <NoticeText>自选分析：触发重点关注信号，立即点击查看</NoticeText>
      <Cross size={31} color="#999" />
    </Notice>

    <Tabs>
      <Tab $w={159}>分时</Tab>
      <Tab $w={168}>五日</Tab>
      <Tab $w={156}>日K</Tab>
      <Tab $w={160}>周K</Tab>
      <Tab $w={150} $active>月K</Tab>
      <Tab $w={163}>更多<Triangle $w={16} $h={13} /></Tab>
      <svg width="54" height="54" viewBox="0 0 54 54" fill="none" stroke="#666" strokeWidth="4" strokeLinejoin="round">
        <path d="M22 2h10l2 7 7 4 7-2 4 9-5 5v5l5 5-4 8-7-2-7 4-2 7H22l-2-7-7-4-7 2-4-8 5-5v-5l-5-5 4-9 7 2 7-4z" />
        <circle cx="27" cy="27" r="8.5" />
      </svg>
    </Tabs>

    <Toolbar>
      <Picker $w={112}>均线<Triangle $w={16} $h={13} /></Picker>
      <Legend
        items={[
          ['MA5:7.47', INK, 12, 159, 9, 20],
          ['10:8.47', '#efbd4e', 12, 121, 9, 20],
          ['20:7.41', '#bb1f77', 12, 121, 10, 20],
        ]}
        size={40}
      />
      <DkPicker $w={132}><FitText w={91}>DK点</FitText><Corner /></DkPicker>
      <Adjust>不复权</Adjust>
    </Toolbar>

    <ChartArea>
      <LeftColumn>
        <MainChart />
        <IndicatorRow $h={63}>
          <Picker $w={151}><FitText w={106}>MACD</FitText><Triangle $w={15} $h={13} /></Picker>
          <Legend
            items={[
              ['DIF:0.10', INK, 3, 111, 7, 16],
              ['DEA:0.24', YELLOW, 14, 123, 5, 16],
              ['M:−0.28', PURPLE, 14, 104, 6, 16],
            ]}
          />
          <NextButton>
            <svg width="20" height="30" viewBox="0 0 20 30" fill="none" stroke="#fff" strokeWidth="4.5" strokeLinecap="round">
              <path d="M4 3l12 12L4 27" />
            </svg>
          </NextButton>
        </IndicatorRow>
        <MacdChart />
        <IndicatorRow $h={64}>
          <Picker $w={156}>换手率<Triangle $w={15} $h={13} /></Picker>
          <Legend
            items={[
              ['36.800', INK, 2, 55, 3, 10],
              ['MA1:76.990', YELLOW, 8, 95, 3, 10],
              ['MA2:172.540', PURPLE, 8, 105, 3, 10],
              ['MA3:115.090', '#11870f', 8, 105, 3, 10],
            ]}
            size={36}
          />
        </IndicatorRow>
        <TurnoverChart />
        <IndicatorRow $h={64}>
          <Picker $w={139}><FitText w={94}>BOLL</FitText><Triangle $w={15} $h={13} /></Picker>
          <Legend
            items={[
              ['MID:7.41', INK, 2, 110, 8, 16],
              ['UP:10.49', YELLOW, 14, 116, 5, 16],
              ['LOW:4.33', PURPLE, 14, 123, 7, 16],
            ]}
          />
        </IndicatorRow>
        <BollChart />
        <IndicatorRow $h={64}>
          <Picker $w={116}><FitText w={70}>ENE</FitText><Triangle $w={15} $h={13} /></Picker>
          <Legend
            items={[
              ['ENE:8.56', INK, 2, 104, 5, 14],
              ['UPPER:9.40', YELLOW, 12, 135, 4, 14],
              ['LOWER:7.71', PURPLE, 12, 140, 7, 15],
            ]}
          />
        </IndicatorRow>
        <EneChart />
        <Dates>
          <FitText w={185}>20211029</FitText>
          <FitText w={185}>20250807</FitText>
        </Dates>
        <Slider>
          {[0, 1].map((n) => (
            <Thumb key={n}><Grip /><Grip /><Grip /></Thumb>
          ))}
        </Slider>
      </LeftColumn>

      <RightColumn>
        <CostChart />
        <CostLegend>
          <LegendKey $color="#5cb543">套牢</LegendKey>
          <LegendKey $color="#e54a4a">获利</LegendKey>
          <LegendKey $color="#347fe0">平均</LegendKey>
        </CostLegend>
        <Stats>
          <StatRow>获利比例：<StatValue><FitText w={104}>67.46%</FitText></StatValue></StatRow>
          <StatRow>平均成本：<StatValue><FitText w={62}>6.82</FitText></StatValue></StatRow>
          <StatRow>90%成本：<StatValue><FitText w={138}>6.42−7.12</FitText></StatValue></StatRow>
          <StatRow>集中度：<StatValue><FitText w={85}>5.17%</FitText></StatValue></StatRow>
        </Stats>
        <NoteRow>
          <NoteLabel>说明<InfoDot>i</InfoDot></NoteLabel>
          <NoteDate><FitText w={174}>2025−08−07</FitText></NoteDate>
        </NoteRow>
      </RightColumn>
    </ChartArea>
    <PeachCard />

    <BottomBar>
      <IndexBox>
        <Caret />
        <FitText w={170}>11163.89</FitText>
        <IndexLine>
          <IndexName>深证</IndexName>
          <FitText w={125}>−0.12%</FitText>
        </IndexLine>
      </IndexBox>
      {navIcons.map(([label, icon]) => (
        <NavItem key={label}>
          <svg width="70" height="62" viewBox="0 0 70 62" fill="none" stroke="#666" strokeWidth="2.8">
            {icon}
          </svg>
          {label}
        </NavItem>
      ))}
    </BottomBar>
  </Page>
);

export default App;
